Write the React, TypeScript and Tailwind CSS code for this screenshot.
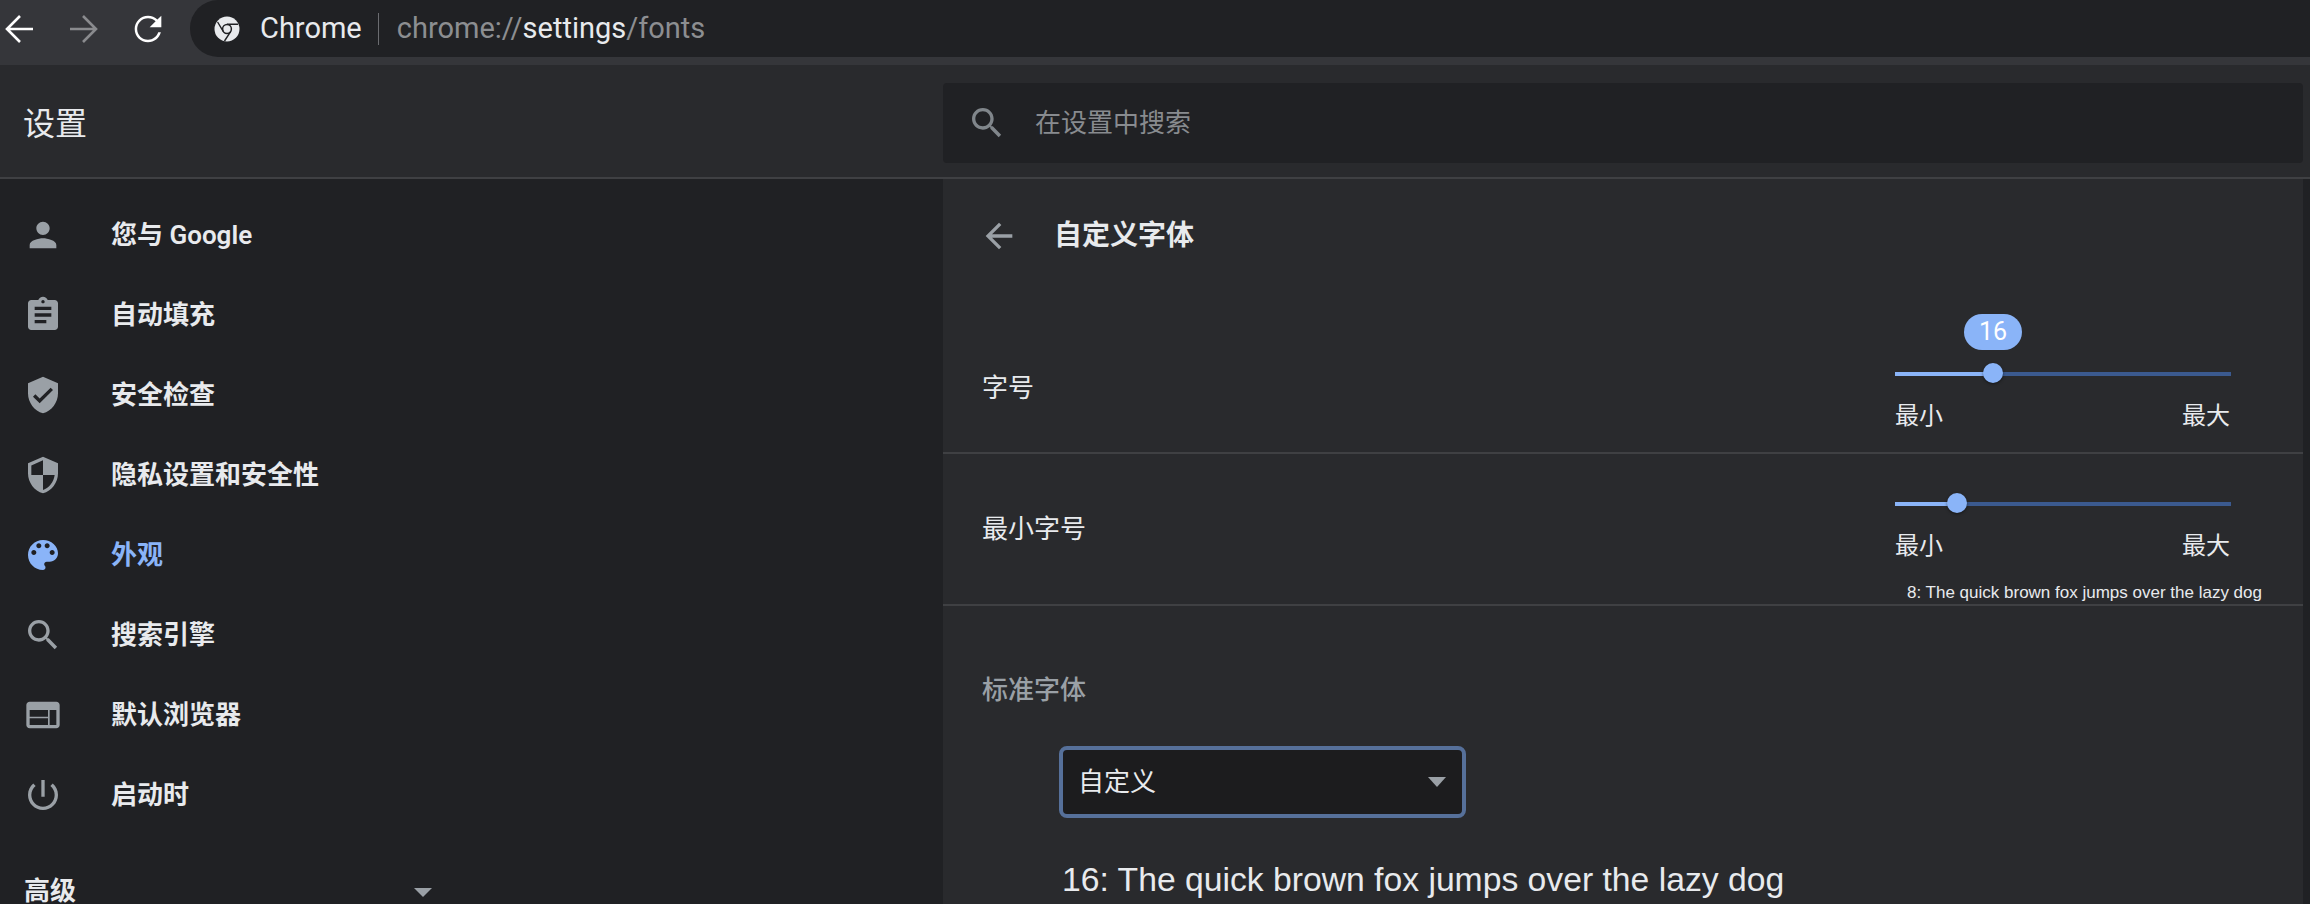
import type { ReactNode } from "react";

const font = "font-['Roboto','Noto_Sans_CJK_SC',sans-serif]";

const icons = {
  person:
    "M12 12c2.21 0 4-1.79 4-4s-1.79-4-4-4-4 1.79-4 4 1.79 4 4 4zm0 2c-2.67 0-8 1.34-8 4v2h16v-2c0-2.66-5.33-4-8-4z",
  assignment:
    "M19 3h-4.18C14.4 1.84 13.3 1 12 1c-1.3 0-2.4.84-2.82 2H5c-1.1 0-2 .9-2 2v14c0 1.1.9 2 2 2h14c1.1 0 2-.9 2-2V5c0-1.1-.9-2-2-2zm-7 0c.55 0 1 .45 1 1s-.45 1-1 1-1-.45-1-1 .45-1 1-1zm2 14H7v-2h7v2zm3-4H7v-2h10v2zm0-4H7V7h10v2z",
  verified:
    "M12 1L3 5v6c0 5.55 3.84 10.74 9 12 5.16-1.26 9-6.45 9-12V5l-9-4zm-2 16l-4-4 1.41-1.41L10 14.17l6.59-6.59L18 9l-8 8z",
  security:
    "M12 1L3 5v6c0 5.55 3.84 10.74 9 12 5.16-1.26 9-6.45 9-12V5l-9-4zm0 10.99h7c-.53 4.12-3.28 7.79-7 8.94V12H5V6.3l7-3.11v8.8z",
  palette:
    "M12 3c-4.97 0-9 4.03-9 9s4.03 9 9 9c.83 0 1.5-.67 1.5-1.5 0-.39-.15-.74-.39-1.01-.23-.26-.38-.61-.38-.99 0-.83.67-1.5 1.5-1.5H16c2.76 0 5-2.24 5-5 0-4.42-4.03-8-9-8zm-5.5 9c-.83 0-1.5-.67-1.5-1.5S5.67 9 6.5 9 8 9.67 8 10.5 7.33 12 6.5 12zm3-4C8.67 8 8 7.33 8 6.5S8.67 5 9.5 5s1.5.67 1.5 1.5S10.33 8 9.5 8zm5 0c-.83 0-1.5-.67-1.5-1.5S13.67 5 14.5 5s1.5.67 1.5 1.5S15.33 8 14.5 8zm3 4c-.83 0-1.5-.67-1.5-1.5S16.67 9 17.5 9s1.5.67 1.5 1.5-.67 1.5-1.5 1.5z",
  search:
    "M15.5 14h-.79l-.28-.27C15.41 12.59 16 11.11 16 9.5 16 5.91 13.09 3 9.5 3S3 5.91 3 9.5 5.91 16 9.5 16c1.61 0 3.09-.59 4.23-1.57l.27.28v.79l5 4.99L20.49 19l-4.99-5zm-6 0C7.01 14 5 11.99 5 9.5S7.01 5 9.5 5 14 7.01 14 9.5 11.99 14 9.5 14z",
  web: "M20 4H4c-1.1 0-1.99.9-1.99 2L2 18c0 1.1.9 2 2 2h16c1.1 0 2-.9 2-2V6c0-1.1-.9-2-2-2zm-5 14H4v-4h11v4zm0-5H4V9h11v4zm5 5h-4V9h4v9z",
  power:
    "M13 3h-2v10h2V3zm4.83 2.17l-1.42 1.42C17.99 7.86 19 9.81 19 12c0 3.87-3.13 7-7 7s-7-3.13-7-7c0-2.19 1.01-4.14 2.58-5.42L6.17 5.17C4.23 6.82 3 9.26 3 12c0 4.97 4.03 9 9 9s9-4.03 9-9c0-2.74-1.23-5.18-3.17-6.83z",
  back: "M20 11H7.83l5.59-5.59L12 4l-8 8 8 8 1.41-1.41L7.83 13H20v-2z",
  refresh:
    "M17.65 6.35C16.2 4.9 14.21 4 12 4c-4.42 0-7.99 3.58-7.99 8s3.57 8 7.99 8c3.73 0 6.84-2.55 7.73-6h-1.6c-.82 2.6-3.24 4.5-6.13 4.5-3.59 0-6.5-2.91-6.5-6.5S8.41 5.5 12 5.5c1.8 0 3.4.73 4.58 1.92L13 11h7V4l-2.35 2.35z",
};

const menu = [
  { icon: icons.person, label: "您与 Google" },
  { icon: icons.assignment, label: "自动填充" },
  { icon: icons.verified, label: "安全检查" },
  { icon: icons.security, label: "隐私设置和安全性" },
  { icon: icons.palette, label: "外观", active: true },
  { icon: icons.search, label: "搜索引擎" },
  { icon: icons.web, label: "默认浏览器" },
  { icon: icons.power, label: "启动时" },
];

function Icon({ d, className }: { d: string; className: string }) {
  return (
    <svg viewBox="0 0 24 24" fill="currentColor" className={className}>
      <path d={d} />
    </svg>
  );
}

function NavStroke({ d, className }: { d: string; className: string }) {
  return (
    <svg
      viewBox="0 0 40 40"
      fill="none"
      stroke="currentColor"
      strokeWidth="2.6"
      className={className}
    >
      <path d={d} />
    </svg>
  );
}

function ChromeLogo() {
  return (
    <svg viewBox="0 0 26 26" className="size-[26px] shrink-0">
      <circle cx="13" cy="13" r="12.5" fill="#e8eaed" />
      <circle cx="13" cy="13" r="4.4" fill="#e8eaed" stroke="#202124" strokeWidth="1.5" />
      <path
        d="M13 8.2H24M9.2 15.3L3.6 6M16.8 15.3L10.5 25"
        stroke="#202124"
        strokeWidth="1.4"
        fill="none"
      />
    </svg>
  );
}

function Slider({ percent, bubble }: { percent: number; bubble?: string }) {
  return (
    <div className="relative h-5 w-full">
      <div className="absolute inset-x-0 top-2 flex h-1">
        <div className="bg-[#8ab4f8]" style={{ width: `${percent}%` }} />
        <div className="flex-1 bg-[#3b5a8f]" />
      </div>
      <div
        className="absolute -top-px size-5 -translate-x-1/2 rounded-full bg-[#8ab4f8] shadow-[0_1px_3px_rgba(0,0,0,0.5)]"
        style={{ left: `${percent}%` }}
      />
      {bubble && (
        <div
          className="absolute -top-[50px] flex h-9 w-[58px] -translate-x-1/2 items-center justify-center rounded-[18px] bg-[#8ab4f8] text-[25px] text-white"
          style={{ left: `${percent}%` }}
        >
          {bubble}
        </div>
      )}
    </div>
  );
}

function MinMax() {
  return (
    <div className="mt-4 flex justify-between pr-px text-[24px] leading-8 text-[#e8eaed]">
      <span>最小</span>
      <span>最大</span>
    </div>
  );
}

function SliderRow({
  label,
  labelClass,
  children,
}: {
  label: string;
  labelClass: string;
  children: ReactNode;
}) {
  return (
    <div className="flex justify-between border-b-2 border-[#3f4043] pl-[39px]">
      <div className={`text-[26px] leading-8 text-[#e8eaed] ${labelClass}`}>{label}</div>
      {children}
    </div>
  );
}

export default function App() {
  return (
    <div className={`${font} h-[904px] w-[2310px] overflow-hidden bg-[#202124]`}>
      <div className="flex h-[65px] items-start bg-[#35363a]">
        <div className="flex h-[57px] w-[190px] shrink-0 items-center">
          <NavStroke d="M33 20H8M20 7L7 20l13 13" className="size-10 text-white" />
          <NavStroke d="M7 20h25M20 7l13 13-13 13" className="ml-[23px] size-10 text-[#8a8b8e]" />
          <Icon d={icons.refresh} className="ml-[25px] size-10 text-white" />
        </div>
        <div className="flex h-[57px] flex-1 items-center rounded-l-[28px] bg-[#202124] pl-6">
          <ChromeLogo />
          <span className="ml-5 mt-px text-[29px] text-[#e8eaed]">Chrome</span>
          <div className="ml-4 mr-[18px] h-8 w-px bg-[#6b6c70]" />
          <span className="mt-px text-[29px] text-[#8c8e91]">
            chrome://<span className="text-[#e8eaed]">settings</span>/fonts
          </span>
        </div>
      </div>

      <div className="flex h-[114px] items-center justify-between border-b-2 border-[#3f4043] bg-[#292a2d]">
        <div className="w-[943px] pl-[23px] pt-[6px] text-[32px] text-[#e8eaed]">设置</div>
        <div className="mr-[7px] mt-1 flex h-20 flex-1 items-center rounded bg-[#202124] pl-6">
          <Icon d={icons.search} className="size-10 text-[#80868b]" />
          <span className="ml-7 text-[26px] text-[#888b8f]">在设置中搜索</span>
        </div>
      </div>

      <div className="flex">
        <nav className="w-[943px] shrink-0 pt-4">
          {menu.map((item) => (
            <div
              key={item.label}
              className={`flex h-20 items-center pl-[23px] text-[26px] font-semibold ${
                item.active ? "text-[#8ab4f8]" : "text-[#e8eaed]"
              }`}
            >
              <Icon
                d={item.icon}
                className={`size-10 ${item.active ? "text-[#8ab4f8]" : "text-[#9aa0a6]"}`}
              />
              <span className="ml-[48px]">{item.label}</span>
            </div>
          ))}
          <div className="relative mt-9 pl-6 text-[26px] font-semibold leading-10 text-[#e8eaed]">
            高级
            <div className="absolute left-[414px] top-[17px] border-x-[9px] border-t-[9px] border-x-transparent border-t-[#9aa0a6]" />
          </div>
        </nav>

        <main className="mr-[7px] flex-1 bg-[#292a2d]">
          <div className="flex h-[113px] items-center pl-9 text-[28px] font-semibold text-[#e8eaed]">
            <Icon d={icons.back} className="size-10 text-[#9aa0a6]" />
            <span className="ml-[35px]">自定义字体</span>
          </div>

          <SliderRow label="字号" labelClass="mt-[80px]">
            <div className="mr-[72px] h-[160px] w-[336px] pt-[72px]">
              <Slider percent={29.2} bubble="16" />
              <MinMax />
            </div>
          </SliderRow>

          <SliderRow label="最小字号" labelClass="mt-[59px]">
            <div className="mr-[72px] h-[150px] w-[336px] pt-10">
              <Slider percent={18.5} />
              <MinMax />
              <div className="mt-[21px] -mr-[31px] whitespace-nowrap pl-3 font-['Liberation_Sans',sans-serif] text-[17px] leading-5 text-[#e8eaed]">
                8: The quick brown fox jumps over the lazy dog
              </div>
            </div>
          </SliderRow>

          <div className="pl-[39px] pt-[68px]">
            <div className="text-[26px] font-medium leading-8 text-[#9aa0a6]">标准字体</div>
            <div className="ml-[77px] mt-10 flex h-[72px] w-[407px] items-center justify-between rounded-lg border-4 border-[#56709a] bg-[#1c1c1e] pl-[15px] pr-4 text-[26px] text-[#e8eaed]">
              自定义
              <div className="border-x-[9px] border-t-[10px] border-x-transparent border-t-[#9aa0a6]" />
            </div>
            <div className="ml-[80px] mt-[41px] whitespace-nowrap font-['Liberation_Sans',sans-serif] text-[33.7px] leading-10 text-[#e8eaed]">
              16: The quick brown fox jumps over the lazy dog
            </div>
          </div>
        </main>
      </div>
    </div>
  );
}
